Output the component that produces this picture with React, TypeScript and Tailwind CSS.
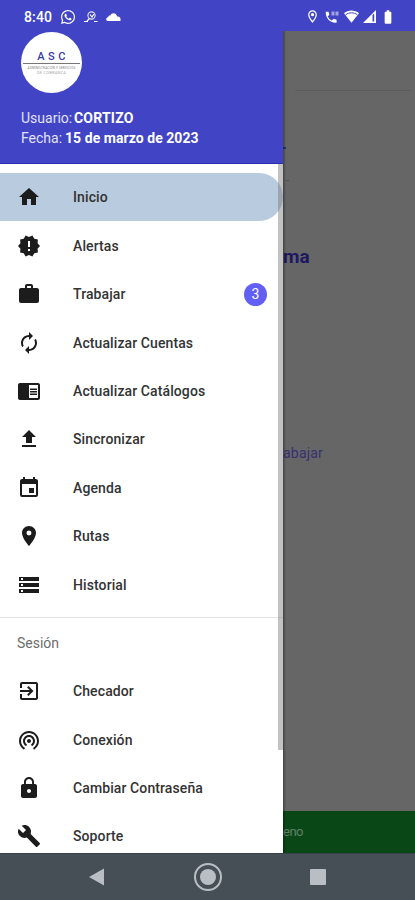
import type { IconType } from "react-icons";
import {
  MdAutorenew,
  MdBatteryFull,
  MdBuild,
  MdChromeReaderMode,
  MdEvent,
  MdExitToApp,
  MdFileUpload,
  MdHome,
  MdLocationOn,
  MdLock,
  MdNewReleases,
  MdOutlineLocationOn,
  MdStorage,
  MdWifiTethering,
  MdWork,
} from "react-icons/md";
import { FaWhatsapp } from "react-icons/fa";

type Item = {
  label: string;
  icon: IconType;
  active?: boolean;
  badge?: number;
};

const mainItems: Item[] = [
  { label: "Inicio", icon: MdHome, active: true },
  { label: "Alertas", icon: MdNewReleases },
  { label: "Trabajar", icon: MdWork, badge: 3 },
  { label: "Actualizar Cuentas", icon: MdAutorenew },
  { label: "Actualizar Catálogos", icon: MdChromeReaderMode },
  { label: "Sincronizar", icon: MdFileUpload },
  { label: "Agenda", icon: MdEvent },
  { label: "Rutas", icon: MdLocationOn },
  { label: "Historial", icon: MdStorage },
];

const sessionItems: Item[] = [
  { label: "Checador", icon: MdExitToApp },
  { label: "Conexión", icon: MdWifiTethering },
  { label: "Cambiar Contraseña", icon: MdLock },
  { label: "Soporte", icon: MdBuild },
];

function MenuItem({ item }: { item: Item }) {
  const Icon = item.icon;
  return (
    <div
      className={
        item.active
          ? "flex h-[48.45px] shrink-0 items-center rounded-r-full bg-[#b9cbdf] pl-[17px] pr-4"
          : "flex h-[48.45px] shrink-0 items-center pl-[17px] pr-4"
      }
    >
      <Icon className="size-6 shrink-0 text-[#1c1c1c]" />
      <span className="ml-8 whitespace-nowrap text-sm font-medium tracking-[0.1px] text-[#333]">
        {item.label}
      </span>
      {item.badge && (
        <span className="ml-auto flex size-[23px] items-center justify-center rounded-full bg-[#625ff5] text-sm text-white">
          {item.badge}
        </span>
      )}
    </div>
  );
}

function StatusBar() {
  return (
    <div className="flex h-[31px] shrink-0 items-center bg-[#4145c5] pl-6 pr-[19px] pt-[2px] text-white">
      <span className="text-sm font-medium tracking-[0.15px]">8:40</span>
      <FaWhatsapp className="ml-2 size-4" />
      <svg className="ml-2 h-3 w-[14px]" viewBox="0 0 14 12" fill="none" stroke="currentColor">
        <circle cx="7.5" cy="4.5" r="3.6" strokeWidth="1.1" opacity=".85" />
        <path d="M6 3.5l2 2.5 2-3M5.5 7.5L3 10M0 10.5h4M10 10.5h3.5" strokeWidth="1.2" />
      </svg>
      <svg className="ml-2 h-[10px] w-[15px]" viewBox="0 0 15 10" fill="currentColor">
        <path d="M2.200 9C-.5 9-.3 5.500 2 5.300 2.300 3.800 3.500 3.300 4.300 3.500 5.500.3 10.300.3 11.200 4.600c1.600-.4 3.300.5 3.300 2.400V9z" />
      </svg>
      <div className="ml-auto flex items-center">
        <MdOutlineLocationOn className="size-[15px]" />
        <svg className="ml-[5px] h-[14px] w-[15px]" viewBox="0 0 15 14" fill="currentColor">
          <path d="M.8 1.8h2.7l.9 3-1.7 1.6c1 2 2.3 3.2 4.2 4.1l1.7-1.7 3 .9v3C5.400 13.500.3 8 .8 1.800z" />
          <path d="M6.500 1.500h3v4h-3zM10.500 1.500h3v4h-3z" opacity=".5" />
        </svg>
        <svg className="ml-1 h-[13px] w-[15px]" viewBox="0 0 15 13">
          <path d="M0 3.200C4.200-.5 10.800-.5 15 3.200L7.500 12.800z" fill="currentColor" />
          <path d="M1.700 4.700c3.500-2.500 8.100-2.500 11.600 0" fill="none" stroke="#4145c5" strokeWidth="1" />
        </svg>
        <svg className="ml-1 h-[13px] w-[13px]" viewBox="0 0 13 13">
          <path d="M0 13L13 0v13z" fill="currentColor" />
          <path d="M9.500 5v6.500h1.700V3.500z" fill="#4145c5" />
        </svg>
        <MdBatteryFull className="ml-1 size-4" />
      </div>
    </div>
  );
}

function Logo() {
  return (
    <div className="flex size-[61px] flex-col items-center rounded-full bg-white pt-[18px]">
      <div className="pl-[3px] text-[11px] font-medium leading-[13px] tracking-[3.5px] text-[#393caa]">
        ASC
      </div>
      <div className="h-px w-[57px] bg-[#777]" />
      <div className="mt-[2px] text-[3px] leading-[4px] tracking-[0.2px] text-[#777]">
        ADMINISTRACION Y SERVICIOS
      </div>
      <div className="text-[4px] leading-[5px] tracking-[0.2px] text-[#aaa]">
        DE COBRANZA
      </div>
    </div>
  );
}

function Drawer() {
  return (
    <div className="relative z-10 flex w-[283px] shrink-0 flex-col overflow-hidden bg-white">
      <div className="flex h-[133px] shrink-0 flex-col border-b border-[#2b2db5] bg-[#4145c5] pl-[21px] pt-px text-sm leading-[20px] text-white">
        <Logo />
        <div className="mt-[15px] flex whitespace-nowrap">
          <span className="w-[53px] text-[#e2e2ff]">Usuario:</span>
          <span className="font-bold tracking-[0.2px]">CORTIZO</span>
        </div>
        <div className="flex whitespace-nowrap">
          <span className="w-[44px] text-[#e2e2ff]">Fecha:</span>
          <span className="font-bold tracking-[0.05px]">15 de marzo de 2023</span>
        </div>
      </div>

      <div className="flex flex-col pt-[9px]">
        {mainItems.map((item) => (
          <MenuItem key={item.label} item={item} />
        ))}
      </div>
      <div className="mt-2 h-px shrink-0 bg-[#e2e2e2]" />
      <div className="flex h-[49px] shrink-0 items-center pl-[17px] pt-px text-sm text-[#6d6d6d]">
        Sesión
      </div>
      <div className="flex flex-col">
        {sessionItems.map((item) => (
          <MenuItem key={item.label} item={item} />
        ))}
      </div>

      {/* scroll thumb */}
      <div className="absolute right-0 top-[133px] h-[586px] w-[5px] bg-[#777]/45" />
    </div>
  );
}

function DimmedPage() {
  return (
    <div className="flex grow flex-col overflow-hidden bg-[#666]">
      <div className="ml-3 mr-1 h-[60px] shrink-0 border-b border-[#5c5c5c]" />
      <div className="mt-[56px] h-[2px] w-[3px] shrink-0 bg-[#203a78]" />
      <div className="ml-[3px] mt-[31px] h-px w-[3px] shrink-0 bg-[#505050]" />
      <div className="mt-[64px] text-[19px] font-bold leading-6 text-[#1e1761]">ma</div>
      <div className="mt-[174px] text-sm leading-5 tracking-[0.2px] text-[#36306f]">abajar</div>
      <div className="mt-auto flex h-[42px] shrink-0 items-center bg-[#0a4716] text-[13px] text-[#63806a]">
        <span className="-tracking-[0.5px]">eno</span>
      </div>
    </div>
  );
}

function NavBar() {
  return (
    <div className="flex h-[47px] shrink-0 items-center border-t border-[#36414c] bg-[#464e56] pl-[88px]">
      <svg className="h-[18px] w-4" viewBox="0 0 16 18">
        <path d="M1 9L16 .5v17z" fill="#b9bec4" />
      </svg>
      <div className="ml-[90px] flex size-[28px] items-center justify-center rounded-full border-2 border-[#b9bec4]">
        <div className="size-4 rounded-full bg-[#b9bec4]" />
      </div>
      <div className="ml-[88px] size-4 rounded-[1px] bg-[#b9bec4]" />
    </div>
  );
}

export default function App() {
  return (
    <div className="flex h-[900px] w-[415px] flex-col overflow-hidden bg-white font-['Roboto',sans-serif]">
      <StatusBar />
      <div className="flex h-[822px] shrink-0">
        <Drawer />
        <div className="z-20 -mr-[3px] w-[3px] shrink-0 bg-linear-to-r from-black/35 to-transparent" />
        <DimmedPage />
      </div>
      <NavBar />
    </div>
  );
}
